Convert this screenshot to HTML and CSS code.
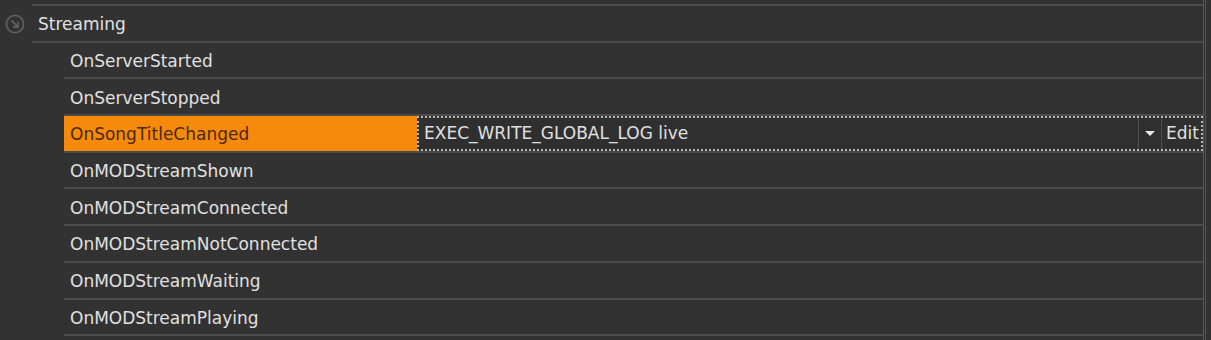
FILE: index.html
```html
<!DOCTYPE html>
<html>
	<head>
		<link rel="stylesheet" href="styles.css">
	</head>
	<body>
	<div class="grid">
		<div class="row top"></div>
		<div class="row group">
			<span class="expander">
				<svg width="20" height="20" viewBox="0 0 20 20"><circle cx="10" cy="10" r="8.6" fill="none" stroke="#5e5e5e" stroke-width="1.8"/><path d="M6.5 6.5 L12.8 12.8 M13 8 L13 13 L8 13" fill="none" stroke="#5e5e5e" stroke-width="1.8"/></svg>
			</span>
			<span class="label">Streaming</span>
		</div>
		<div class="row item"><span class="label">OnServerStarted</span></div>
		<div class="row item"><span class="label">OnServerStopped</span></div>
		<div class="row item selected">
			<span class="label name">OnSongTitleChanged</span>
			<div class="editor">
				<span class="value">EXEC_WRITE_GLOBAL_LOG live</span>
				<span class="drop"><span class="arrow"></span></span>
				<span class="edit">Edit</span>
			</div>
		</div>
		<div class="row item"><span class="label">OnMODStreamShown</span></div>
		<div class="row item"><span class="label">OnMODStreamConnected</span></div>
		<div class="row item"><span class="label">OnMODStreamNotConnected</span></div>
		<div class="row item"><span class="label">OnMODStreamWaiting</span></div>
		<div class="row item"><span class="label">OnMODStreamPlaying</span></div>
	</div>
	</body>
</html>
```

FILE: styles.css
```css
body{
	margin: 0;
	background-color: #323232;
	font-family: "DejaVu Sans", sans-serif;
	font-size: 17px;
	color: #e0e0e0;
	overflow: hidden;
}
.grid{
	width: 1203px;
	height: 340px;
	border-right: 3px double #555;
}
.row{
	display: flex;
	align-items: center;
	box-sizing: border-box;
	height: 36.7px;
	padding-top: 2px;
	border-bottom: 2px solid #4b4b4b;
}
.row.top{
	height: 6px;
	padding-top: 0;
	margin-left: 32px;
}
.group{
	margin-left: 0;
	padding-left: 5px;
	position: relative;
}
.group::after{
	content: "";
	position: absolute;
	left: 0;
	width: 32px;
	bottom: -2px;
	height: 2px;
	background-color: #323232;
}
.expander{
	width: 20px;
	height: 20px;
	margin-right: 13px;
	display: flex;
}
.item{
	margin-left: 64px;
	padding-left: 6px;
}
.selected{
	padding-left: 0;
	padding-top: 0;
}
.selected .name{
	background-color: #f68a0c;
	color: #4a2800;
	width: 353px;
	height: 100%;
	padding-left: 6px;
	padding-top: 2px;
	display: flex;
	align-items: center;
	box-sizing: border-box;
}
.editor{
	flex: 1;
	height: 100%;
	display: flex;
	align-items: center;
	box-sizing: border-box;
	border: 2px dotted #b8b8b8;
	background-color: #2f2f2f;
}
.value{
	flex: 1;
	padding-left: 5px;
}
.drop{
	width: 22px;
	height: 100%;
	border-left: 1px solid #4e4e4e;
	border-right: 1px solid #4e4e4e;
	display: flex;
	align-items: center;
	justify-content: center;
}
.arrow{
	width: 0;
	height: 0;
	border-left: 5px solid transparent;
	border-right: 5px solid transparent;
	border-top: 5px solid #e8e8e8;
}
.edit{
	padding: 0 2px 0 4px;
}
```
